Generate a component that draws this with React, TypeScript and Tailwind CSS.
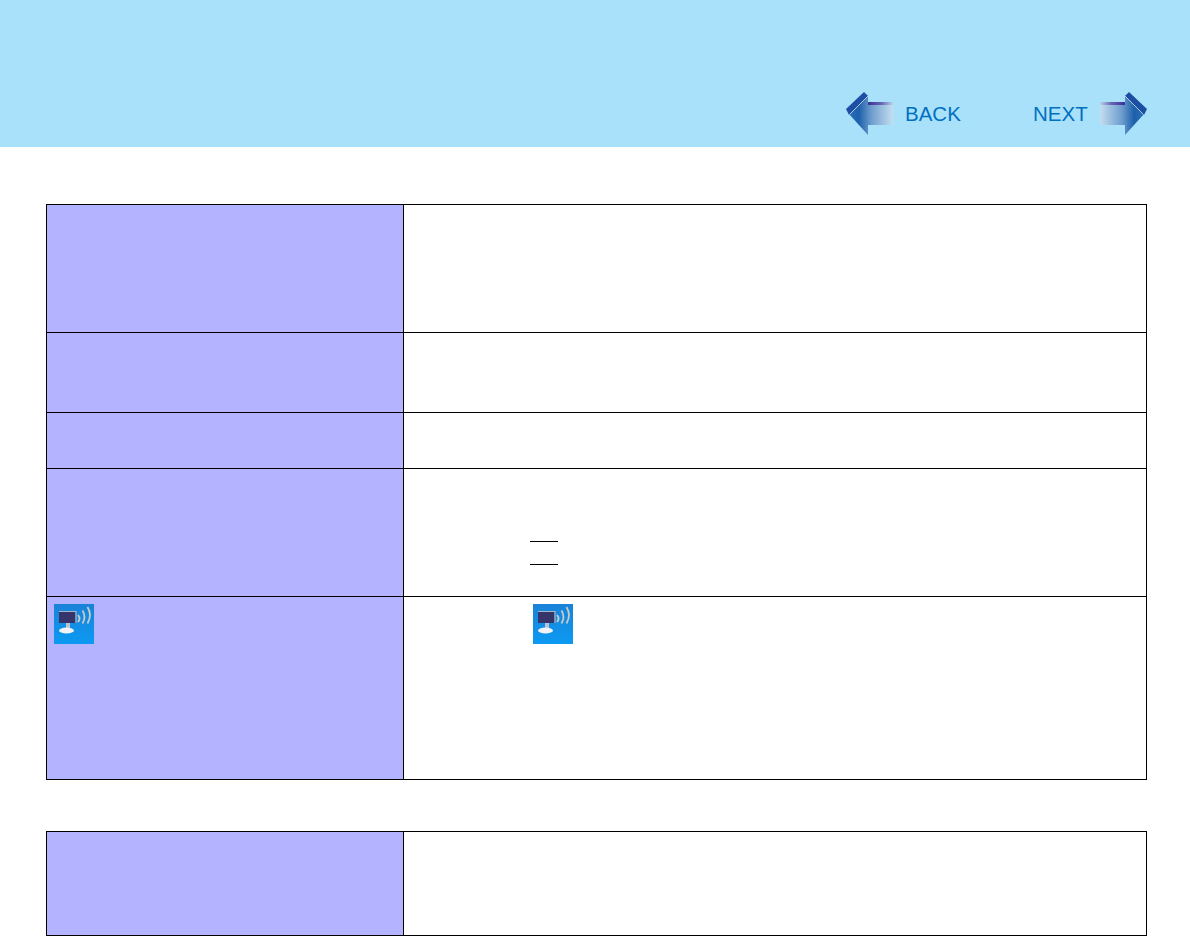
import React from "react";

function Arrow({ id, flip }: { id: string; flip?: boolean }) {
  return (
    <svg width="48" height="46" viewBox="0 0 48 46" className={flip ? "block -scale-x-100" : "block"}>
      <defs>
        <linearGradient id={id} x1="0" x2="1" y1="0" y2="0">
          <stop offset="0" stopColor="#2a72b8" />
          <stop offset="0.22" stopColor="#1c5fab" />
          <stop offset="0.5" stopColor="#6d9ccd" />
          <stop offset="1" stopColor="#c4deef" />
        </linearGradient>
        <linearGradient id={id + "t"} x1="0" x2="1" y1="0" y2="0">
          <stop offset="0" stopColor="#3b2f96" />
          <stop offset="0.55" stopColor="#6a66b4" />
          <stop offset="1" stopColor="#b8d4ea" />
        </linearGradient>
      </defs>
      <path d="M3 24 L22 5 L22 12 L47 12 L47 35 L22 35 L22 45 Z" fill={`url(#${id})`} />
      <rect x="22" y="12" width="25" height="3" fill={`url(#${id}t)`} />
      <path d="M0 19 L18 2 L22 6 L3 25 Z" fill="#1c4fa3" />
      <path d="M3.5 24.5 L22 6" stroke="#d5e6f3" strokeWidth="0.8" fill="none" />
    </svg>
  );
}

function WifiIcon({ id }: { id: string }) {
  return (
    <svg width="40" height="40" viewBox="0 0 40 40" className="block">
      <defs>
        <linearGradient id={id} x1="0" x2="0" y1="0" y2="1">
          <stop offset="0" stopColor="#1a82d8" />
          <stop offset="1" stopColor="#0c9af2" />
        </linearGradient>
        <filter id={id + "b"} x="-10%" y="-10%" width="120%" height="120%">
          <feGaussianBlur stdDeviation="0.6" />
        </filter>
      </defs>
      <rect width="40" height="40" fill={`url(#${id})`} />
      <g filter={`url(#${id}b)`}>
        <rect x="5" y="8" width="16.5" height="11" fill="#34346c" />
        <path d="M5 7.5 H22 V19" stroke="#aab4c4" strokeWidth="1.2" fill="none" />
        <rect x="12" y="19" width="4" height="5" fill="#b8c4d4" />
        <ellipse cx="12.5" cy="26.5" rx="7.5" ry="3" fill="#f1f3f7" />
        <path d="M24 11 Q27 14.5 24 18" stroke="#c6ccca" strokeWidth="1.8" fill="none" />
        <path d="M28.5 6.5 Q32.5 13 28.5 19.5" stroke="#c6ccca" strokeWidth="1.8" fill="none" />
        <path d="M33.5 3 Q38.5 11 33.5 19.5" stroke="#c6ccca" strokeWidth="1.8" fill="none" />
      </g>
    </svg>
  );
}

function Row({ h, last, children, label }: { h: string; last?: boolean; children?: React.ReactNode; label?: React.ReactNode }) {
  return (
    <div className={`flex ${h} ${last ? "" : "border-b border-black"}`}>
      <div className="w-[357px] shrink-0 bg-[#b3b3ff] border-r border-black pl-[7px] pt-[7px]">{label}</div>
      <div className="flex-1 bg-white">{children}</div>
    </div>
  );
}

export default function App() {
  return (
    <div className="w-[1190px] h-[936px] overflow-hidden bg-white font-['Liberation_Sans',Arial,sans-serif]">
      <header className="h-[147px] bg-[#aae1fa] flex justify-end items-start pt-[90px] pr-[43px]">
        <div className="flex items-center text-[20.5px] leading-[23px] text-[#0070c0]">
          <Arrow id="backArrow" />
          <span className="ml-[11px] w-[128px]">BACK</span>
          <span className="w-[66px]">NEXT</span>
          <Arrow id="nextArrow" flip />
        </div>
      </header>

      <section className="ml-[46px] mt-[57px] w-[1101px] border border-black">
        <Row h="h-[128px]" />
        <Row h="h-[80px]" />
        <Row h="h-[56px]" />
        <Row h="h-[128px]">
          <div className="pl-[126px] pt-[72px]">
            <div className="w-[28px] border-t border-black" />
            <div className="w-[28px] border-t border-black mt-[22px]" />
          </div>
        </Row>
        <Row h="h-[182px]" last label={<WifiIcon id="wifiA" />}>
          <div className="pl-[129px] pt-[7px]">
            <WifiIcon id="wifiB" />
          </div>
        </Row>
      </section>

      <section className="ml-[46px] mt-[51px] w-[1101px] border border-black">
        <Row h="h-[103px]" last />
      </section>
    </div>
  );
}
